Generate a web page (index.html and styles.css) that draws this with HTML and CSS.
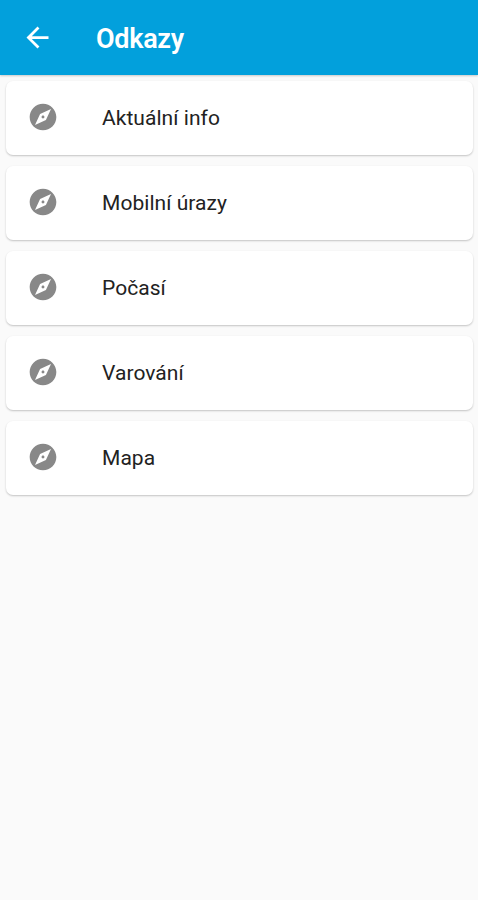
FILE: index.html
```html
<!DOCTYPE html>
<html lang="cs">
<head>
    <meta charset="UTF-8">
    <meta name="viewport" content="width=device-width, initial-scale=1.0">
    <title>Odkazy</title>
    <link rel="stylesheet" href="styles.css">
</head>
<body>
    <svg class="sprite" width="0" height="0">
        <symbol id="compass" viewBox="0 0 24 24">
            <path d="M12 10.9c-.61 0-1.1.49-1.1 1.1s.49 1.1 1.1 1.1c.61 0 1.1-.49 1.1-1.1s-.49-1.1-1.1-1.1zM12 2C6.48 2 2 6.48 2 12s4.48 10 10 10 10-4.48 10-10S17.52 2 12 2zm2.19 12.19L6 18l3.81-8.19L18 6l-3.81 8.19z"/>
        </symbol>
    </svg>

    <header class="toolbar">
        <svg class="back" viewBox="0 0 24 24">
            <path d="M20 11H7.83l5.59-5.59L12 4l-8 8 8 8 1.41-1.41L7.83 13H20v-2z"/>
        </svg>
        <h1>Odkazy</h1>
    </header>

    <main class="list">
        <a class="card"><svg class="icon"><use href="#compass"/></svg><span>Aktuální info</span></a>
        <a class="card"><svg class="icon"><use href="#compass"/></svg><span>Mobilní úrazy</span></a>
        <a class="card"><svg class="icon"><use href="#compass"/></svg><span>Počasí</span></a>
        <a class="card"><svg class="icon"><use href="#compass"/></svg><span>Varování</span></a>
        <a class="card"><svg class="icon"><use href="#compass"/></svg><span>Mapa</span></a>
    </main>
</body>
</html>
```
FILE: styles.css
```css
body {
    margin: 0;
    font-family: Roboto, sans-serif;
    background-color: #fafafa;
}

.sprite {
    display: block;
}

.toolbar {
    display: flex;
    align-items: center;
    height: 75px;
    padding-left: 21px;
    box-sizing: border-box;
    background-color: #02a0dc;
    box-shadow: 0 1px 2px rgba(0, 0, 0, 0.2);
}

.back {
    width: 33px;
    height: 33px;
    fill: #fff;
}

.toolbar h1 {
    margin: 3px 0 0 42px;
    color: #fff;
    font-size: 27px;
    font-weight: 600;
    letter-spacing: -0.3px;
}

.list {
    display: flex;
    flex-direction: column;
    gap: 11px;
    padding: 6px 5px 8px 6px;
}

.card {
    display: flex;
    align-items: center;
    height: 74px;
    padding: 0 0 1px 21px;
    box-sizing: border-box;
    background-color: #fff;
    border-radius: 7px;
    box-shadow: 0 1px 2px rgba(0, 0, 0, 0.22);
}

.icon {
    width: 32px;
    height: 32px;
    margin-bottom: 1px;
    fill: #888;
}

.card span {
    margin-left: 43px;
    color: #222;
    font-size: 21px;
    letter-spacing: 0.05px;
}
```
